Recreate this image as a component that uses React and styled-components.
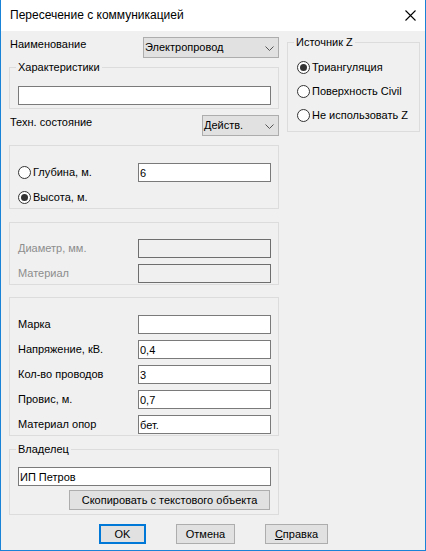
import React from 'react'
import styled, { createGlobalStyle } from 'styled-components'

const GlobalStyle = createGlobalStyle`
  html, body {
    margin: 0;
    padding: 0;
    background: #fff;
  }
  body {
    font-family: "Liberation Sans", Arial, sans-serif;
    font-size: 11px;
    color: #000;
  }
  * {
    box-sizing: border-box;
  }
`

function App() {
    return (<>
        <GlobalStyle />
        <Window>
            <TitleBar>
                <Title>Пересечение с коммуникацией</Title>
                <Close width="11" height="11" viewBox="0 0 11 11">
                    <path d="M0.5 0.5 L10.5 10.5 M10.5 0.5 L0.5 10.5" stroke="#000" strokeWidth="1.1" fill="none" />
                </Close>
            </TitleBar>
            <Body>
                <Columns>
                    <LeftCol>
                        <TopRow>
                            <TopLabel>Наименование</TopLabel>
                            <Combo $w={136}>
                                <span>Электропровод</span>
                                <Chevron />
                            </Combo>
                        </TopRow>

                        <Group $mt={9} $pt={18} $pb={3}>
                            <Legend>Характеристики</Legend>
                            <TextBox $w={253} defaultValue="" />
                        </Group>

                        <TopRow $mt={6}>
                            <TopLabel>Техн. состояние</TopLabel>
                            <Combo $w={77}>
                                <span>Действ.</span>
                                <Chevron />
                            </Combo>
                        </TopRow>

                        <Group $mt={9} $pt={17} $pb={1}>
                            <Rows>
                                <Row>
                                    <RadioOption>
                                        <Radio />
                                        Глубина, м.
                                    </RadioOption>
                                    <TextBox $w={133} defaultValue="6" />
                                </Row>
                                <Row>
                                    <RadioOption>
                                        <Radio $checked />
                                        Высота, м.
                                    </RadioOption>
                                </Row>
                            </Rows>
                        </Group>

                        <Group $mt={13} $pt={16} $pb={1}>
                            <Rows>
                                <Row>
                                    <FieldLabel $disabled>Диаметр, мм.</FieldLabel>
                                    <TextBox $w={133} disabled defaultValue="" />
                                </Row>
                                <Row>
                                    <FieldLabel $disabled>Материал</FieldLabel>
                                    <TextBox $w={133} disabled defaultValue="" />
                                </Row>
                            </Rows>
                        </Group>

                        <Group $mt={12} $pt={17} $pb={1}>
                            <Rows>
                                {[
                                    ['Марка', ''],
                                    ['Напряжение, кВ.', '0,4'],
                                    ['Кол-во проводов', '3'],
                                    ['Провис, м.', '0,7'],
                                    ['Материал опор', 'бет.'],
                                ].map(([label, value]) => (
                                    <Row key={label}>
                                        <FieldLabel>{label}</FieldLabel>
                                        <TextBox $w={133} defaultValue={value} />
                                    </Row>
                                ))}
                            </Rows>
                        </Group>

                        <Group $mt={13} $pt={17} $pb={4}>
                            <Legend>Владелец</Legend>
                            <TextBox $w={253} defaultValue="ИП Петров" />
                            <CopyRow>
                                <Button $w={201}>Скопировать с текстового объекта</Button>
                            </CopyRow>
                        </Group>
                    </LeftCol>

                    <RightCol>
                        <Group $mt={0} $pt={17} $pb={9} $pl={9}>
                            <Legend>Источник Z</Legend>
                            <RadioList>
                                <RadioOption $tight>
                                    <Radio $checked />
                                    Триангуляция
                                </RadioOption>
                                <RadioOption $tight>
                                    <Radio />
                                    Поверхность Civil
                                </RadioOption>
                                <RadioOption $tight>
                                    <Radio />
                                    Не использовать Z
                                </RadioOption>
                            </RadioList>
                        </Group>
                    </RightCol>
                </Columns>

                <ButtonRow>
                    <Button $w={47} $default>OK</Button>
                    <Button $w={59}>Отмена</Button>
                    <Button $w={63}><u>С</u>правка</Button>
                </ButtonRow>
            </Body>
        </Window>
    </>)
}

function Chevron() {
    return (
        <ChevronSvg width="9" height="5" viewBox="0 0 9 5">
            <polyline points="0.5,0.5 4.5,4.5 8.5,0.5" stroke="#555" strokeWidth="1" fill="none" />
        </ChevronSvg>
    )
}

export default App

const Window = styled.div`
width:426px;
height:551px;
display:flex;
flex-direction:column;
border-left:1px solid #1883d7;
border-right:1px solid #1883d7;
border-bottom:1px solid #1883d7;
`
const TitleBar = styled.div`
height:31px;
flex-shrink:0;
background:#fff;
display:flex;
align-items:center;
justify-content:space-between;
padding:0 9px 1px 9px;
`
const Title = styled.span`
font-size:12px;
line-height:15px;
`
const Close = styled.svg`
display:block;
`
const Body = styled.div`
flex:1;
background:#f0f0f0;
padding:6px 4px 0 8px;
display:flex;
flex-direction:column;
`
const Columns = styled.div`
display:flex;
align-items:flex-start;
gap:8px;
`
const LeftCol = styled.div`
width:270px;
display:flex;
flex-direction:column;
`
const RightCol = styled.div`
width:133px;
margin-top:5px;
display:flex;
flex-direction:column;
`
const TopRow = styled.div`
margin-top:${p => p.$mt || 0}px;
display:flex;
justify-content:space-between;
align-items:flex-start;
`
const TopLabel = styled.span`
padding-left:1px;
line-height:13px;
padding-top:1px;
`
const Combo = styled.div`
width:${p => p.$w}px;
height:21px;
background:#e1e1e1;
border:1px solid #adadad;
display:flex;
align-items:center;
justify-content:space-between;
padding:0 4px 0 1px;
line-height:13px;
`
const ChevronSvg = styled.svg`
display:block;
margin-top:1px;
`
const Group = styled.div`
position:relative;
margin-top:${p => p.$mt}px;
border:1px solid #dcdcdc;
padding:${p => p.$pt}px 7px ${p => p.$pb}px ${p => p.$pl || 8}px;
`
const Legend = styled.span`
position:absolute;
top:-7px;
left:6px;
padding:0 2px;
line-height:13px;
background:#f0f0f0;
`
const Rows = styled.div`
display:flex;
flex-direction:column;
gap:6px;
`
const Row = styled.div`
height:19px;
display:flex;
align-items:center;
`
const FieldLabel = styled.span`
width:120px;
line-height:13px;
color:${p => p.$disabled ? '#8d8d8d' : '#000'};
`
const TextBox = styled.input`
width:${p => p.$w}px;
height:19px;
margin:0;
padding:0 1px;
font:inherit;
font-size:11px;
color:#000;
background:#fff;
border:1px solid #7a7a7a;
border-radius:0;
outline:none;
&:disabled{
    background:#f0f0f0;
    border-color:#6e6e6e;
}
`
const RadioOption = styled.label`
width:${p => p.$tight ? 'auto' : '120px'};
height:14px;
display:flex;
align-items:center;
line-height:13px;
`
const Radio = styled.span`
width:13px;
height:13px;
flex-shrink:0;
margin-right:${p => p.$checked ? 2 : 2}px;
border:1px solid #333;
border-radius:50%;
background:#fff;
display:flex;
align-items:center;
justify-content:center;
&::after{
    content:'';
    width:7px;
    height:7px;
    border-radius:50%;
    background:${p => p.$checked ? '#333' : 'transparent'};
}
`
const RadioList = styled.div`
display:flex;
flex-direction:column;
gap:10px;
`
const CopyRow = styled.div`
margin-top:4px;
display:flex;
justify-content:flex-end;
padding-right:1px;
`
const Button = styled.div`
width:${p => p.$w}px;
height:20px;
background:#e1e1e1;
border:${p => p.$default ? '2px solid #0078d7' : '1px solid #adadad'};
display:flex;
align-items:center;
justify-content:center;
line-height:13px;
`
const ButtonRow = styled.div`
margin-top:9px;
display:flex;
justify-content:center;
gap:30px;
padding-right:3px;
`
